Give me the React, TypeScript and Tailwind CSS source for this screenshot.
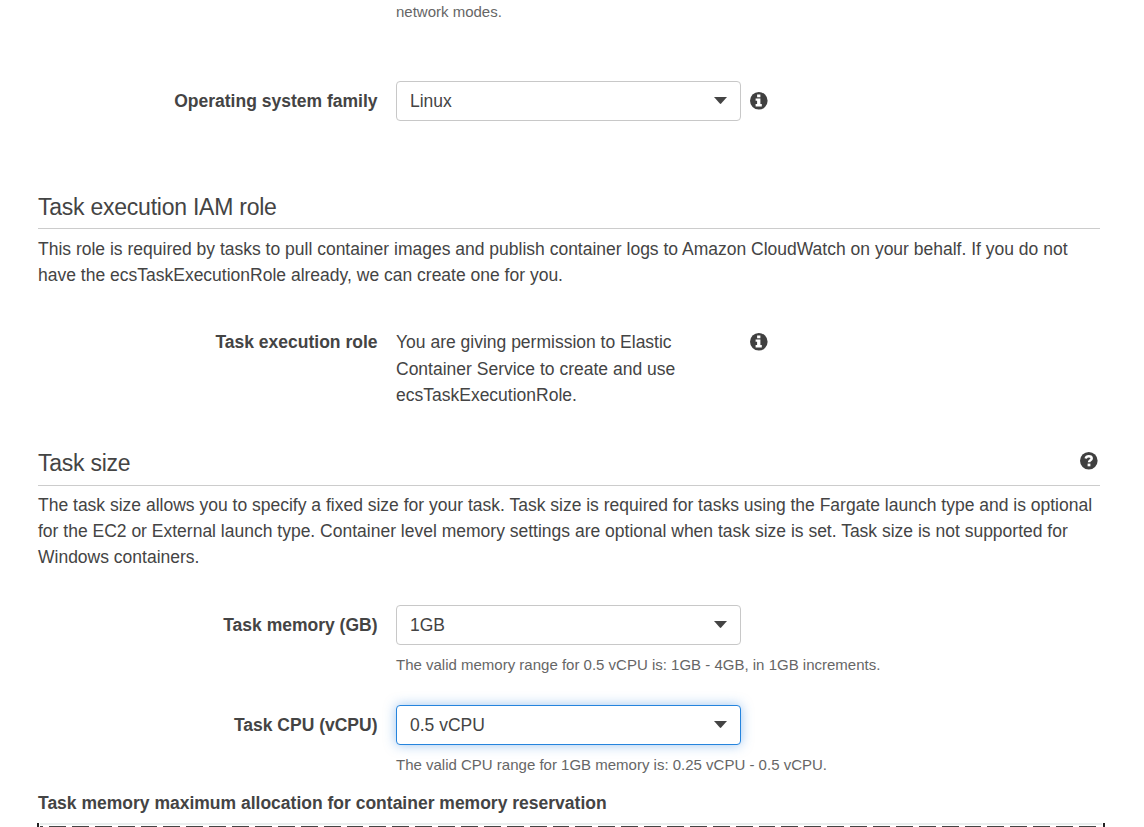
const Info = () => (
  <svg className="block h-[18px] w-[18px]" viewBox="0 0 18 18"><circle cx="8.8" cy="8.8" r="8.8" fill="#404040" /><path d="M7.1 2.4h3.3v2.8H7.1zM5.6 6.4h4.8v5.7h1.4v2.4H5.6v-2.4h1.5V8.8H5.6z" fill="#fff" /></svg>
);
const Help = () => (
  <svg className="block h-[18px] w-[18px]" viewBox="0 0 18 18"><circle cx="8.8" cy="8.8" r="8.8" fill="#404040" /><path d="M5.7 6.5C6.1 4.9 7.3 4.2 8.8 4.2c1.7 0 2.9.9 2.9 2.2 0 1.8-2.7 1.8-2.7 3.8" fill="none" stroke="#fff" strokeWidth="2.5" /><path d="M7.6 11.6h2.8v2.7H7.6z" fill="#fff" /></svg>
);
const Select = ({ value, focus }: { value: string; focus?: boolean }) => (
  <div className={`flex h-10 w-[345px] items-center justify-between rounded-[4px] border bg-white pr-[13px] pl-[13px] ${focus ? "border-[#2584dd] shadow-[0_0_12px_rgba(60,140,225,0.5)]" : "border-[#c8c8c8]"}`}>
    <span>{value}</span>
    <svg className="-mt-px h-[7px] w-[13px]" viewBox="0 0 13 7"><path d="M0 0h13L7.2 6.6Q6.5 7.2 5.8 6.6z" fill="#444" /></svg>
  </div>
);
const Label = ({ children }: { children: string }) => (
  <div className="mr-[18.5px] w-[377.5px] shrink-0 text-right font-bold">{children}</div>
);

export default function App() {
  return (
    <main className="h-[827px] w-[1144px] overflow-hidden bg-white font-['Liberation_Sans',Arial,sans-serif] text-[17.5px] leading-[26px] whitespace-nowrap text-[#444]">
      <div className="h-[81px] pl-[396px] text-[15px] leading-6 text-[#666]">network modes.</div>
      <div className="flex h-10 items-center"><Label>Operating system family</Label><Select value="Linux" /><div className="ml-[9px]"><Info /></div></div>
      <section className="mx-[38px] mt-[71px] w-[1062px]">
        <h2 className="h-[37px] border-b border-[#ccc] text-[23px] leading-[30px] tracking-[-0.24px]">Task execution IAM role</h2>
        <p className="mt-[7px]">This role is required by tasks to pull container images and publish container logs to Amazon CloudWatch on your behalf. If you do not<br />have the ecsTaskExecutionRole already, we can create one for you.</p>
      </section>
      <div className="mt-[41px] flex"><Label>Task execution role</Label><p className="w-[345px] leading-[26.5px]">You are giving permission to Elastic<br />Container Service to create and use<br />ecsTaskExecutionRole.</p><div className="mt-1 ml-[9px]"><Info /></div></div>
      <section className="mx-[38px] mt-[39.5px] w-[1062px]">
        <div className="flex h-[38px] justify-between border-b border-[#ccc]"><h2 className="text-[23px] leading-[30px] tracking-[-0.24px]">Task size</h2><div className="mt-1 mr-[2px]"><Help /></div></div>
        <p className="mt-[6px]">The task size allows you to specify a fixed size for your task. Task size is required for tasks using the Fargate launch type and is optional<br />for the EC2 or External launch type. Container level memory settings are optional when task size is set. Task size is not supported for<br />Windows containers.</p>
      </section>
      <div className="mt-[35px] flex h-10 items-center"><Label>Task memory (GB)</Label><Select value="1GB" /></div>
      <div className="mt-2 ml-[396px] h-[52px] text-[15px] leading-6 text-[#666]">The valid memory range for 0.5 vCPU is: 1GB - 4GB, in 1GB increments.</div>
      <div className="flex h-10 items-center"><Label>Task CPU (vCPU)</Label><Select value="0.5 vCPU" focus /></div>
      <div className="mt-2 ml-[396px] h-[37px] text-[15px] leading-6 text-[#666]">The valid CPU range for 1GB memory is: 0.25 vCPU - 0.5 vCPU.</div>
      <div className="ml-[38px] h-[33px] font-bold">Task memory maximum allocation for container memory reservation</div>
      <div className="ml-[37px] flex h-1 w-[1068px] justify-between">
        <div className="w-[2px] bg-[#222]" />
        <div className="mx-px grow border-t-2 border-[#e9eeee]"><div className="h-px" /><div className="h-px bg-[repeating-linear-gradient(90deg,#444_0,#444_3px,transparent_3px,transparent_9px,#444_9px,#444_22.89px)]" /></div>
        <div className="w-[2px] bg-[#222]" />
      </div>
    </main>
  );
}
